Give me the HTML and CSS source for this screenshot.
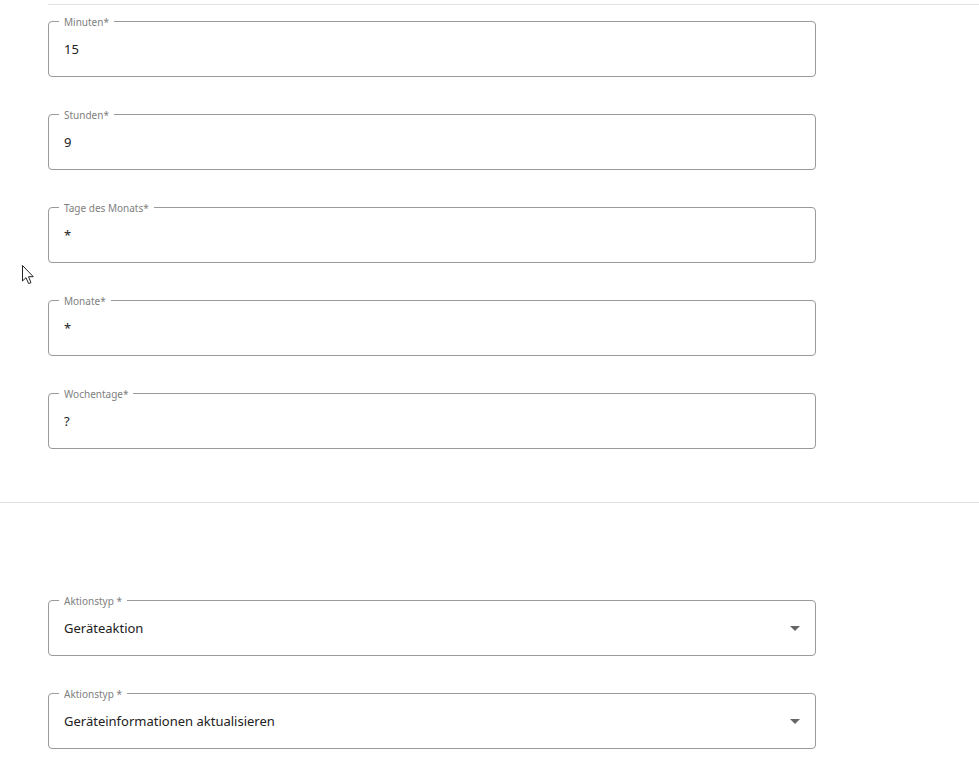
FILE: index.html
```html
<!DOCTYPE html>
<html lang="de">
<head>
<meta charset="utf-8">
<title>Zeitplan</title>
<link rel="stylesheet" href="styles.css">
</head>
<body>
<div class="page">
  <section class="schedule">
    <fieldset class="field">
      <legend>Minuten*</legend>
      <div class="value">15</div>
    </fieldset>
    <fieldset class="field">
      <legend>Stunden*</legend>
      <div class="value">9</div>
    </fieldset>
    <fieldset class="field">
      <legend>Tage des Monats*</legend>
      <div class="value">*</div>
    </fieldset>
    <fieldset class="field">
      <legend>Monate*</legend>
      <div class="value">*</div>
    </fieldset>
    <fieldset class="field">
      <legend>Wochentage*</legend>
      <div class="value">?</div>
    </fieldset>
  </section>
  <hr class="divider">
  <section class="actions">
    <fieldset class="field select">
      <legend>Aktionstyp *</legend>
      <div class="value">Geräteaktion<span class="caret"></span></div>
    </fieldset>
    <fieldset class="field select">
      <legend>Aktionstyp *</legend>
      <div class="value">Geräteinformationen aktualisieren<span class="caret"></span></div>
    </fieldset>
  </section>
  <svg class="cursor" width="14" height="22" viewBox="0 0 14 22">
    <path d="M1.5 1.5 L1.5 17 L5 13.6 L7.6 19.6 L10 18.6 L7.5 12.7 L12.3 12.7 Z" fill="#fff" stroke="#222" stroke-width="1" stroke-linejoin="round"/>
  </svg>
</div>
</body>
</html>
```
FILE: styles.css
```css
* { box-sizing: border-box; }
html, body { margin: 0; padding: 0; background: #fff; }
body {
  font-family: "Noto Sans", "Open Sans", sans-serif;
  color: #212121;
  width: 979px;
  height: 760px;
  overflow: hidden;
}
.page { position: relative; }
.schedule {
  margin-left: 48px;
  margin-top: 4px;
  border-top: 1px solid #e3e3e3;
  padding-top: 9px;
  display: flex;
  flex-direction: column;
  gap: 30px;
}
.field {
  margin: 0;
  width: 768px;
  border: 1px solid #9a9a9a;
  border-radius: 4px;
  padding: 0 14px 0 10px;
  min-width: 0;
}
.field legend {
  font-size: 10px;
  line-height: 12px;
  color: #808080;
  padding: 2px 5px 0;
  margin: 0;
}
.value {
  font-size: 13px;
  line-height: 20px;
  padding: 11px 0 17px 5px;
  color: #212121;
  display: flex;
  align-items: center;
  justify-content: space-between;
}
.divider {
  margin: 53px 0 0 0;
  border: 0;
  border-top: 1px solid #e3e3e3;
  height: 0;
}
.actions {
  margin-left: 48px;
  padding-top: 90px;
  display: flex;
  flex-direction: column;
  gap: 30px;
}
.caret {
  width: 0;
  height: 0;
  border-left: 5px solid transparent;
  border-right: 5px solid transparent;
  border-top: 5px solid #666;
  margin-right: 1px;
}
.cursor {
  position: absolute;
  left: 21px;
  top: 260px;
}
```
